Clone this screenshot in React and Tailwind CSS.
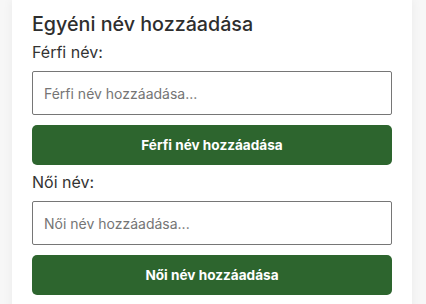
const font = { fontFamily: 'Inter, "Noto Sans", sans-serif' };

function Field({ label, placeholder, button }) {
  return (
    <div>
      <label className="block text-[16px] leading-6 text-[#333333]">{label}</label>
      <input
        type="text"
        placeholder={placeholder}
        className="mt-[7px] block h-[44px] w-full rounded-[2px] border border-[#767676] bg-white px-[11px] text-[14px] text-[#333] placeholder:text-[#757575] outline-none"
      />
      <button
        type="button"
        className="mt-[10px] block h-[40px] w-full rounded-[5px] bg-[#2d652e] text-[13.6px] font-bold text-white"
      >
        {button}
      </button>
    </div>
  );
}

export default function App() {
  return (
    <div className="min-h-[304px] bg-[#f7f7f7] px-[12px]" style={font}>
      <div className="w-[400px] bg-white px-[20px] pt-[10px] pb-[20px] shadow-[0_0_10px_rgba(0,0,0,0.06)]">
        <h3 className="text-[19.7px] font-medium leading-7 text-[#2e2e2e]">Egyéni név hozzáadása</h3>
        <div className="mt-[2px] flex flex-col gap-[5px]">
          <Field label="Férfi név:" placeholder="Férfi név hozzáadása..." button="Férfi név hozzáadása" />
          <Field label="Női név:" placeholder="Női név hozzáadása..." button="Női név hozzáadása" />
        </div>
      </div>
    </div>
  );
}
